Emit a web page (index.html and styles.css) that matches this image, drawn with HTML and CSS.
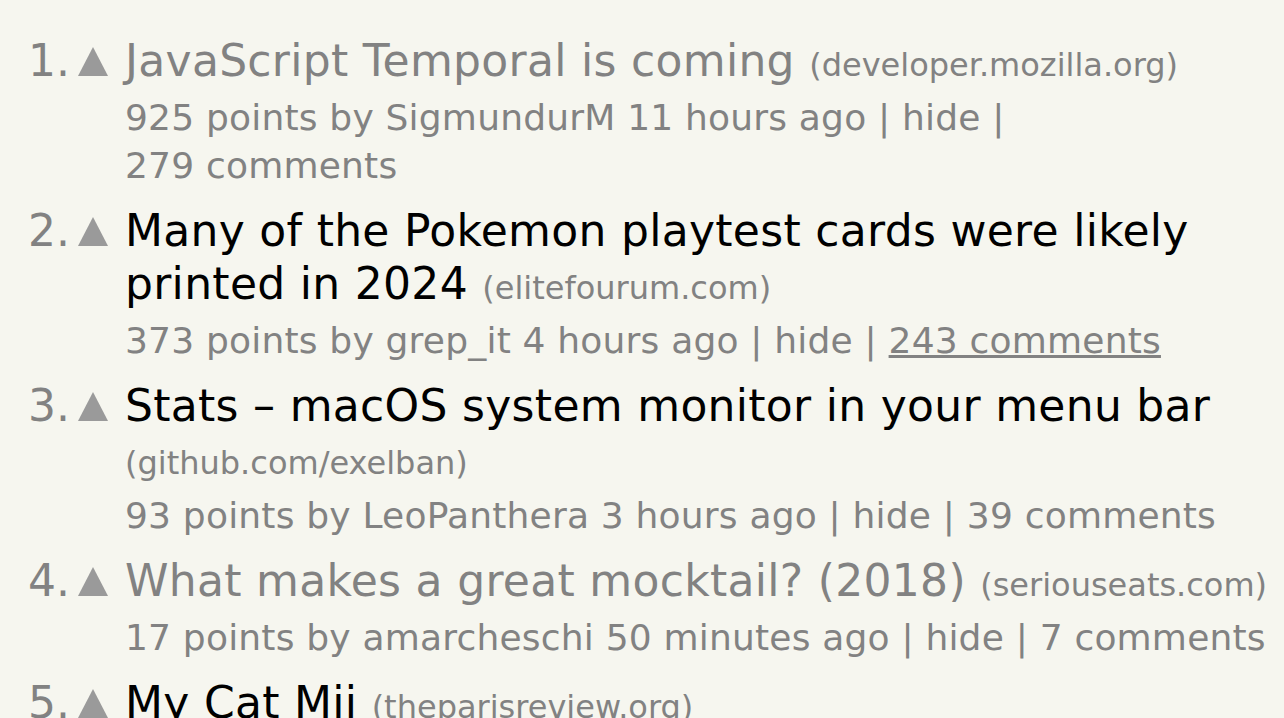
FILE: index.html
```html
<!DOCTYPE html>
<html lang="en">
<head>
<meta charset="utf-8" />
<meta name="viewport" content="width=device-width, initial-scale=1.0" />
<title>Hacker News</title>
<link rel="stylesheet" href="styles.css">
</head>
<body>
	<div class="itemlist">
		<div class="item">
			<span class="rank">1.</span>
			<span class="votelinks"><svg class="votearrow" viewBox="0 0 30 29"><polygon points="15,0 30,29 0,29" /></svg></span>
			<div class="story">
				<div class="titleline"><a class="visited" href="#">JavaScript Temporal is coming</a> <span class="sitebit">(developer.mozilla.org)</span></div>
				<div class="subtext">925 points by SigmundurM 11 hours ago | hide | <a href="#">279&nbsp;comments</a></div>
			</div>
		</div>
		<div class="item">
			<span class="rank">2.</span>
			<span class="votelinks"><svg class="votearrow" viewBox="0 0 30 29"><polygon points="15,0 30,29 0,29" /></svg></span>
			<div class="story">
				<div class="titleline"><a href="#">Many of the Pokemon playtest cards were likely printed in 2024</a> <span class="sitebit">(elitefourum.com)</span></div>
				<div class="subtext">373 points by grep_it 4 hours ago | hide | <a class="hover" href="#">243&nbsp;comments</a></div>
			</div>
		</div>
		<div class="item">
			<span class="rank">3.</span>
			<span class="votelinks"><svg class="votearrow" viewBox="0 0 30 29"><polygon points="15,0 30,29 0,29" /></svg></span>
			<div class="story">
				<div class="titleline"><a href="#">Stats – macOS system monitor in your menu bar</a> <span class="sitebit">(github.com/exelban)</span></div>
				<div class="subtext">93 points by LeoPanthera 3 hours ago | hide | <a href="#">39&nbsp;comments</a></div>
			</div>
		</div>
		<div class="item">
			<span class="rank">4.</span>
			<span class="votelinks"><svg class="votearrow" viewBox="0 0 30 29"><polygon points="15,0 30,29 0,29" /></svg></span>
			<div class="story">
				<div class="titleline"><a class="visited" href="#">What makes a great mocktail? (2018)</a> <span class="sitebit">(seriouseats.com)</span></div>
				<div class="subtext">17 points by amarcheschi 50 minutes ago | hide | <a href="#">7&nbsp;comments</a></div>
			</div>
		</div>
		<div class="item">
			<span class="rank">5.</span>
			<span class="votelinks"><svg class="votearrow" viewBox="0 0 30 29"><polygon points="15,0 30,29 0,29" /></svg></span>
			<div class="story">
				<div class="titleline"><a href="#">My Cat Mii</a> <span class="sitebit">(theparisreview.org)</span></div>
			</div>
		</div>
	</div>
</body>
</html>
```

FILE: styles.css
```css
html {
	width: 100%;
	height: 100%;
}

body {
	margin: 0;
	background-color: #F6F6EF;
	color: #828282;
	font-family: "DejaVu Sans", Verdana, sans-serif;
	overflow: hidden;
}

a {
	color: #828282;
	text-decoration: none;
}

.itemlist {
	padding: 34px 6px 0 0;
}

.item {
	display: grid;
	grid-template-columns: 70px 55px 1fr;
	margin-bottom: 14px;
}

.rank {
	font-size: 44px;
	line-height: 53px;
	text-align: right;
}

.votelinks {
	padding: 13px 0 0 8px;
}

.votearrow {
	display: block;
	width: 30px;
	height: 29px;
	fill: #9A9A9A;
}

.titleline {
	font-size: 44px;
	line-height: 53px;
	letter-spacing: 0.3px;
}

.titleline a {
	color: #000000;
}

.titleline a.visited {
	color: #828282;
}

.sitebit {
	font-size: 32px;
	line-height: 1;
	letter-spacing: 0;
}

.subtext {
	margin-top: 7px;
	font-size: 36px;
	line-height: 48px;
	letter-spacing: 0.2px;
}

.subtext a.hover {
	text-decoration: underline;
}
```
